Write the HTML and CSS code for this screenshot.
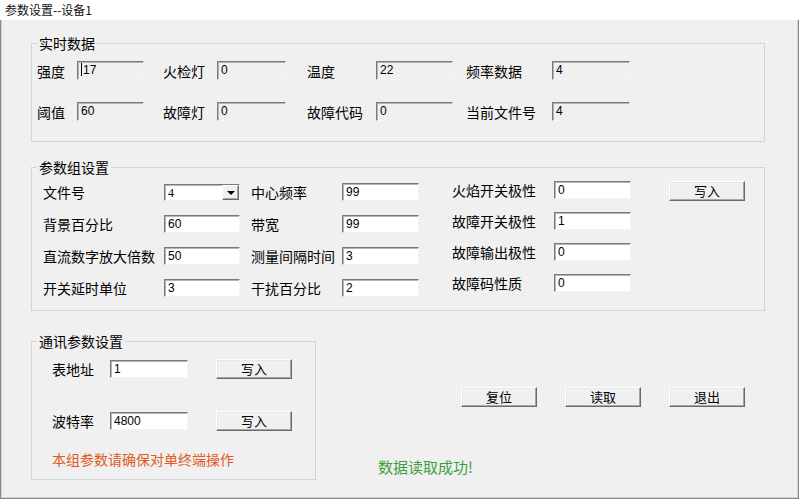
FILE: index.html
```html
<!DOCTYPE html>
<html lang="zh-CN">
<head>
<meta charset="utf-8">
<title>参数设置--设备1</title>
<link rel="stylesheet" href="styles.css">
</head>
<body>
<div class="window">
  <div class="titlebar">参数设置--设备1</div>
  <div class="client">
    <fieldset class="group g-rt">
      <legend>实时数据</legend>
      <div class="rt-grid">
        <span class="lbl">强度</span><div class="edit ro w67"><span class="caret"></span>17</div>
        <span class="lbl">火检灯</span><div class="edit ro w69">0</div>
        <span class="lbl">温度</span><div class="edit ro w77">22</div>
        <span class="lbl">频率数据</span><div class="edit ro w78">4</div>
        <span class="lbl">阈值</span><div class="edit ro w67">60</div>
        <span class="lbl">故障灯</span><div class="edit ro w69">0</div>
        <span class="lbl">故障代码</span><div class="edit ro w77">0</div>
        <span class="lbl">当前文件号</span><div class="edit ro w78">4</div>
      </div>
    </fieldset>

    <fieldset class="group g-pg">
      <legend>参数组设置</legend>
      <div class="pg-body">
        <div class="col col-a">
          <span class="lbl">文件号</span>
          <div class="combo"><span class="combo-val">4</span><span class="combo-btn"><span class="tri"></span></span></div>
          <span class="lbl">背景百分比</span><div class="edit w76">60</div>
          <span class="lbl">直流数字放大倍数</span><div class="edit w76">50</div>
          <span class="lbl">开关延时单位</span><div class="edit w76">3</div>
        </div>
        <div class="col col-b">
          <span class="lbl">中心频率</span><div class="edit w77">99</div>
          <span class="lbl">带宽</span><div class="edit w77">99</div>
          <span class="lbl">测量间隔时间</span><div class="edit w77">3</div>
          <span class="lbl">干扰百分比</span><div class="edit w77">2</div>
        </div>
        <div class="col col-c">
          <span class="lbl">火焰开关极性</span><div class="edit w77">0</div>
          <span class="lbl">故障开关极性</span><div class="edit w77">1</div>
          <span class="lbl">故障输出极性</span><div class="edit w77">0</div>
          <span class="lbl">故障码性质</span><div class="edit w77">0</div>
        </div>
        <div class="btn pg-btn">写入</div>
      </div>
    </fieldset>

    <div class="bottom">
      <fieldset class="group g-comm">
        <legend>通讯参数设置</legend>
        <div class="comm-body">
          <div class="comm-row">
            <span class="lbl comm-lbl">表地址</span><div class="edit w78">1</div><div class="btn comm-btn">写入</div>
          </div>
          <div class="comm-row row2">
            <span class="lbl comm-lbl">波特率</span><div class="edit w78">4800</div><div class="btn comm-btn">写入</div>
          </div>
          <div class="warn">本组参数请确保对单终端操作</div>
        </div>
      </fieldset>
      <div class="actions">
        <div class="btn-row">
          <div class="btn">复位</div>
          <div class="btn">读取</div>
          <div class="btn">退出</div>
        </div>
        <div class="status">数据读取成功!</div>
      </div>
    </div>
  </div>
</div>
</body>
</html>
```

FILE: styles.css
```css
* { box-sizing: border-box; }
html, body { margin: 0; padding: 0; background: #ffffff; }
body {
  width: 800px;
  height: 500px;
  overflow: hidden;
  font-family: "Noto Sans CJK SC", "Microsoft YaHei", sans-serif;
  font-size: 14px;
  color: #000;
}
.window { width: 799px; }
.titlebar {
  height: 20px;
  background: #ffffff;
  font-size: 12px;
  line-height: 20px;
  padding-left: 5px;
  color: #111;
}
.client {
  height: 479px;
  background: #f0f0f0;
  border: 1px solid #8a8a8a;
  border-top: none;
  box-shadow: inset 1px 0 0 #d2d2d2, inset -1px 0 0 #d2d2d2, inset 0 -1px 0 #d2d2d2;
  overflow: hidden;
}

/* group boxes */
.group {
  border: 1px solid #d3d3d3;
  margin: 0;
  padding: 0;
  min-width: 0;
}
.group legend {
  font-size: 14px;
  line-height: 18px;
  padding: 0 2px;
  margin-left: 5px;
}
.lbl { white-space: nowrap; line-height: 18px; }

/* edits */
.edit {
  height: 18px;
  background: #ffffff;
  border: 1px solid;
  border-color: #7a7a7a #f4f4f4 #f4f4f4 #7a7a7a;
  box-shadow: inset 1px 1px 0 #b4b4b4;
  font-family: "Liberation Sans", Arial, sans-serif;
  font-size: 12px;
  line-height: 14px;
  padding: 1px 0 0 3px;
  white-space: nowrap;
  overflow: hidden;
}
.edit.ro { background: #f0f0f0; height: 19px; }
.caret {
  display: inline-block;
  width: 1px;
  height: 13px;
  background: #000;
  vertical-align: -2px;
  margin-right: 1px;
}
.w67 { width: 67px; }
.w69 { width: 69px; }
.w76 { width: 76px; }
.w77 { width: 77px; }
.w78 { width: 78px; }

/* buttons */
.btn {
  width: 76px;
  height: 20px;
  background: #f0f0f0;
  border: 1px solid;
  border-color: #ffffff #6a6a6a #6a6a6a #ffffff;
  box-shadow: inset -1px -1px 0 #a7a7a7, inset 1px 1px 0 #e6e6e6;
  font-size: 13px;
  line-height: 17px;
  text-align: center;
  color: #000;
}

/* group 1 */
.g-rt { margin: 14px 0 0 30px; width: 734px; }
.rt-grid {
  display: grid;
  grid-template-columns: 40px 86px 54px 90px 69px 90px 86px 78px;
  grid-auto-rows: 19px;
  row-gap: 22px;
  align-items: center;
  padding: 9px 0 20px 5px;
}

/* group 2 */
.g-pg { margin: 16px 0 0 30px; width: 734px; }
.pg-body {
  display: flex;
  align-items: flex-start;
  padding: 7px 0 13px 11px;
}
.col {
  display: grid;
  grid-auto-rows: 18px;
  row-gap: 14px;
  align-items: center;
}
.col-a { grid-template-columns: 121px 76px; }
.col-b { grid-template-columns: 91px 77px; margin-left: 11px; }
.col-c { grid-template-columns: 102px 77px; margin-left: 33px; margin-top: -2px; row-gap: 13px; }
.pg-btn { margin-left: 38px; margin-top: -2px; }

.combo {
  width: 76px;
  height: 17px;
  display: flex;
  background: #ffffff;
  border: 1px solid;
  border-color: #7a7a7a #f4f4f4 #f4f4f4 #7a7a7a;
  box-shadow: inset 1px 1px 0 #b4b4b4;
}
.combo-val {
  flex: 1;
  font-family: "Liberation Serif", "Times New Roman", serif;
  font-size: 12px;
  line-height: 14px;
  padding: 1px 0 0 3px;
}
.combo-btn {
  width: 17px;
  height: 15px;
  background: #f0f0f0;
  border: 1px solid;
  border-color: #ffffff #6a6a6a #6a6a6a #ffffff;
  box-shadow: inset -1px -1px 0 #a7a7a7;
  display: flex;
  align-items: center;
  justify-content: center;
}
.tri {
  width: 0;
  height: 0;
  border-left: 4px solid transparent;
  border-right: 4px solid transparent;
  border-top: 4px solid #000;
  margin-top: 1px;
}

/* bottom area */
.bottom { display: flex; margin-top: 21px; align-items: flex-start; }
.g-comm { margin-left: 30px; width: 285px; }
.comm-body { padding: 9px 0 11px 20px; }
.comm-row { display: flex; align-items: center; height: 20px; }
.comm-row.row2 { margin-top: 32px; }
.comm-lbl { width: 58px; }
.comm-btn { margin-left: 28px; }
.warn {
  margin-top: 19px;
  line-height: 18px;
  color: #e2581f;
  white-space: nowrap;
}
.actions { flex: 1; padding-top: 55px; }
.btn-row { display: flex; gap: 28px; margin-left: 145px; }
.status {
  margin: 50px 0 0 62px;
  font-size: 15px;
  line-height: 20px;
  color: #3c9f3c;
}
```
